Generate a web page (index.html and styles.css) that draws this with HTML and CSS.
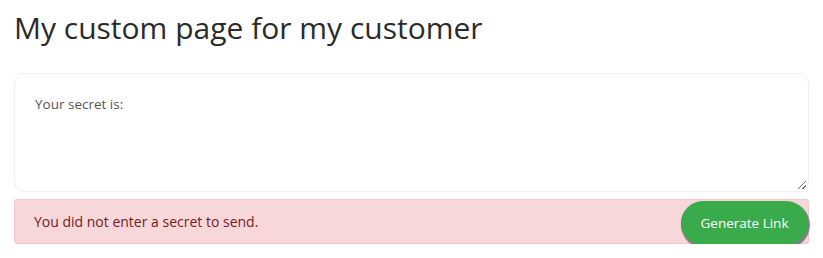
FILE: index.html
```html
<!DOCTYPE html>
<html>
<head>
<meta charset="utf-8">
<link rel="stylesheet" href="styles.css">
</head>
<body>
<div class="page">
  <h1 class="title">My custom page for my customer</h1>
  <div class="secret-box">
    <label class="secret-label">Your secret is:</label>
    <span class="grip"></span>
  </div>
  <div class="alert">
    <span class="alert-text">You did not enter a secret to send.</span>
    <button class="btn">Generate Link</button>
  </div>
</div>
</body>
</html>
```

FILE: styles.css
```css
html, body {
  margin: 0;
  padding: 0;
  background: #fff;
}
body {
  font-family: "Open Sans", "Noto Sans", sans-serif;
  color: #333;
}
.page {
  padding: 0 14px 0 14px;
  width: 795px;
}
.title {
  margin: 0;
  padding-top: 8px;
  font-size: 30px;
  font-weight: 400;
  line-height: 40px;
  color: #2b2b2b;
}
.secret-box {
  position: relative;
  margin-top: 25px;
  height: 119px;
  border: 1px solid #efefef;
  border-radius: 10px;
  box-sizing: border-box;
  padding: 20px 20px;
}
.secret-label {
  display: block;
  font-size: 13.5px;
  line-height: 21px;
  color: #555;
}
.grip {
  position: absolute;
  right: 2px;
  bottom: 2px;
  width: 8px;
  height: 8px;
  background: linear-gradient(135deg, transparent 45%, #777 45%, #777 55%, transparent 55%, transparent 72%, #777 72%, #777 82%, transparent 82%);
}
.alert {
  margin-top: 7px;
  height: 45px;
  box-sizing: border-box;
  border: 1px solid #f5c6cb;
  border-radius: 3px;
  background: #f8d7da;
  display: flex;
  justify-content: space-between;
  align-items: flex-start;
  padding-left: 19px;
}
.alert-text {
  font-size: 14px;
  line-height: 43px;
  color: #721c24;
}
.btn {
  margin-top: 1px;
  margin-right: 0;
  height: 44px;
  width: 127px;
  border: none;
  border-radius: 22px;
  background: #39ab4b;
  color: #fff;
  font-family: "Open Sans", "Noto Sans", sans-serif;
  font-size: 13.5px;
  padding: 0;
  box-shadow: 1px 2px 1px 1px #7f7f7f;
}
```
